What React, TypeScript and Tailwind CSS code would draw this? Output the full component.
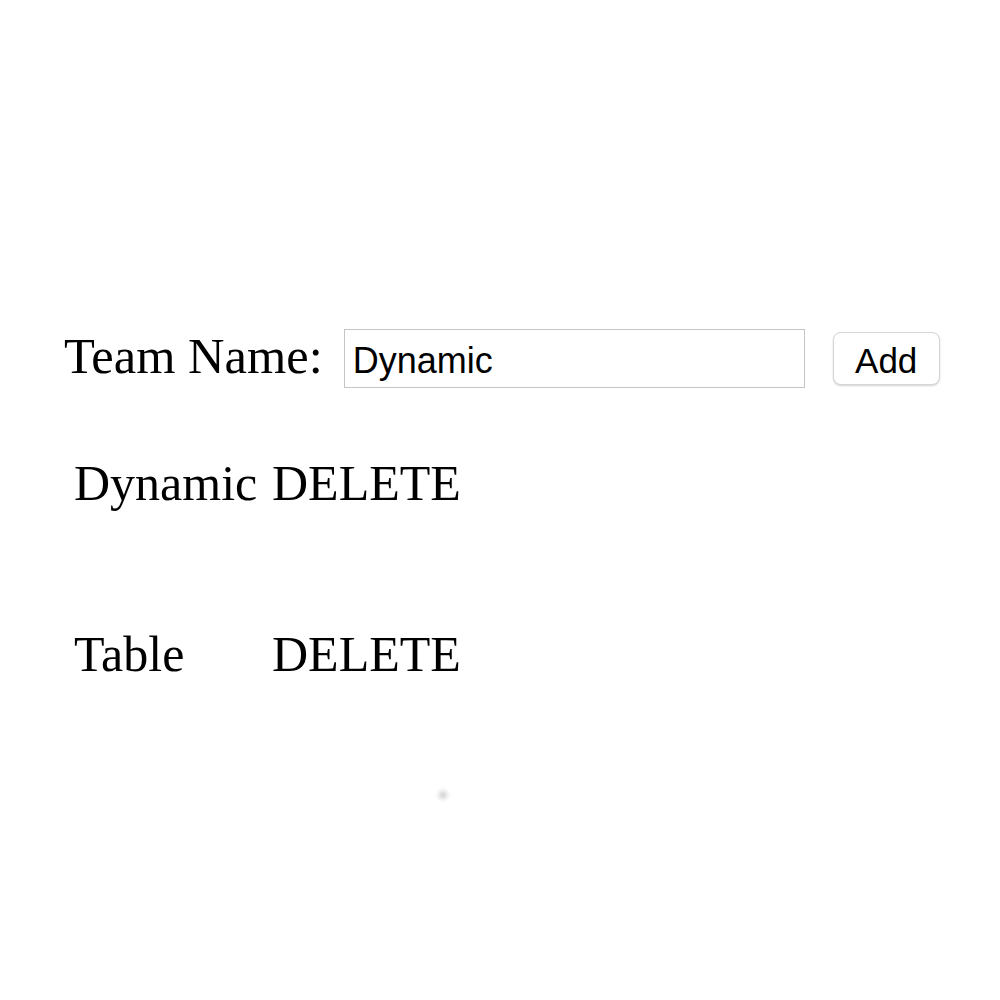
import { useState } from "react";

const serif = "font-['Liberation_Serif','Times_New_Roman',serif]";
const sans = "font-['Liberation_Sans',Arial,sans-serif]";

export default function App() {
  const [name, setName] = useState("Dynamic");
  const [teams, setTeams] = useState<string[]>(["Dynamic", "Table"]);

  const addTeam = () => {
    if (name.trim()) setTeams(prev => [...prev, name.trim()]);
  };

  const removeTeam = (index: number) => {
    setTeams(prev => prev.filter((_, i) => i !== index));
  };

  return (
    <div className="min-h-[1000px] w-[1000px] bg-white text-black">
      <div className="flex items-start pt-[327px] pl-[64px]">
        <label className={`${serif} text-[50.5px] leading-[58px]`}>Team Name:</label>
        <input
          value={name}
          onChange={e => setName(e.target.value)}
          className={`${sans} mt-[2px] ml-[21px] h-[59px] w-[461px] border border-[#c4c4c4] pt-[5px] pl-[8px] text-[36px] leading-[41px] text-black outline-none`}
        />
        <button
          onClick={addTeam}
          className={`${sans} mt-[5px] ml-[28px] h-[53px] w-[107px] rounded-lg border border-[#d6d6d6] bg-white pt-[4px] text-[35px] leading-[40px] shadow-[0_1px_2px_rgba(0,0,0,0.18)]`}
        >
          Add
        </button>
      </div>

      <div className={`${serif} mt-[66px] ml-[74px] grid grid-cols-[198px_auto] gap-y-[113px] text-[50px] leading-[58px]`}>
        {teams.map((team, i) => (
          <div key={i} className="contents">
            <span>{team}</span>
            <span className="cursor-pointer" onClick={() => removeTeam(i)}>DELETE</span>
          </div>
        ))}
      </div>

      <div className="mt-[108px] ml-[439px] h-2 w-2 rounded-full bg-[#d0d0d0] blur-[2px]" />
    </div>
  );
}
